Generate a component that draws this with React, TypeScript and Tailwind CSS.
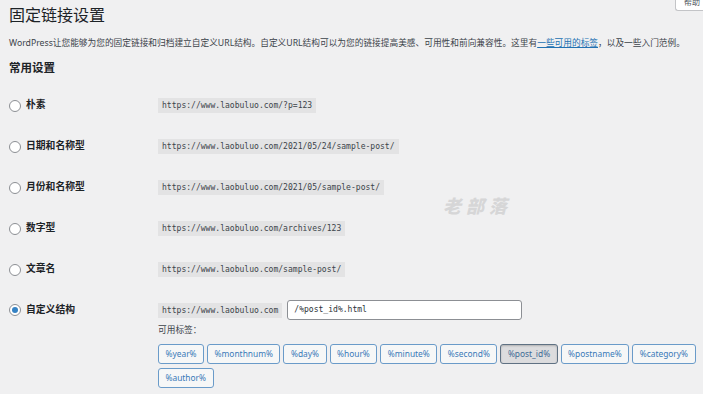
import React from "react";

const rows = [
  { label: "朴素", url: "https://www.laobuluo.com/?p=123" },
  { label: "日期和名称型", url: "https://www.laobuluo.com/2021/05/24/sample-post/" },
  { label: "月份和名称型", url: "https://www.laobuluo.com/2021/05/sample-post/" },
  { label: "数字型", url: "https://www.laobuluo.com/archives/123" },
  { label: "文章名", url: "https://www.laobuluo.com/sample-post/" },
];

const tags = [
  "%year%",
  "%monthnum%",
  "%day%",
  "%hour%",
  "%minute%",
  "%second%",
  "%post_id%",
  "%postname%",
  "%category%",
  "%author%",
];

const sans = "font-['Noto_Sans','Noto_Sans_CJK_SC',sans-serif]";

function Radio({ checked }: { checked?: boolean }) {
  return (
    <span className="flex h-[12px] w-[12px] shrink-0 items-center justify-center rounded-full border border-[#8c8f94] bg-white">
      {checked && <span className="h-[6px] w-[6px] rounded-full bg-[#3582c4]" />}
    </span>
  );
}

function Code({ children }: { children: React.ReactNode }) {
  return (
    <code className="bg-[#e3e3e4] px-[4px] py-[2px] font-['DejaVu_Sans_Mono',monospace] text-[8.05px] leading-[11px] text-[#3c434a]">
      {children}
    </code>
  );
}

export default function App() {
  return (
    <div className={`relative h-[394px] w-[703px] overflow-hidden bg-[#f0f0f1] pl-[9px] ${sans}`}>
      <div className="absolute right-0 top-0 h-[11px] w-[28px] overflow-hidden rounded-bl-[3px] border-b border-l border-[#c3c4c7] bg-white">
        <span className="absolute left-[8px] top-[-3px] text-[8px] leading-[10px] text-[#50575e]">帮助</span>
      </div>

      <div className="pointer-events-none absolute left-[443px] top-[196px] text-[18px] font-black italic leading-[20px] tracking-[5px] text-[#d6d6d7]">
        老部落
      </div>

      <h1 className="pt-[5px] text-[16px] leading-[20px] font-normal text-[#1d2327]">固定链接设置</h1>

      <p className="mt-[12px] text-[8.7px] leading-[12px] whitespace-nowrap text-[#3c434a]">
        WordPress让您能够为您的固定链接和归档建立自定义URL结构。自定义URL结构可以为您的链接提高美感、可用性和前向兼容性。这里有
        <a className="text-[#2271b1] underline">一些可用的标签</a>
        ，以及一些入门范例。
      </p>

      <h2 className="mt-[12px] text-[11.5px] leading-[14px] font-bold text-[#1d2327]">常用设置</h2>

      <div className="mt-[10px] flex flex-col">
        {rows.map((r) => (
          <div key={r.label} className="flex h-[41px] items-center">
            <div className="flex w-[149px] items-center gap-[5px]">
              <Radio />
              <span className="text-[9.8px] font-bold text-[#1d2327]">{r.label}</span>
            </div>
            <Code>{r.url}</Code>
          </div>
        ))}
      </div>

      <div className="mt-[10px] flex items-start">
        <div className="flex h-[20px] w-[149px] shrink-0 items-center gap-[5px]">
          <Radio checked />
          <span className="text-[9.8px] font-bold text-[#1d2327]">自定义结构</span>
        </div>
        <div className="flex w-[545px] flex-col">
          <div className="flex items-center gap-[5px]">
            <Code>https://www.laobuluo.com</Code>
            <div className="flex h-[20px] w-[235px] items-center rounded-[3px] border border-[#8c8f94] bg-white px-[6px] font-['DejaVu_Sans_Mono',monospace] text-[8.05px] text-[#2c3338]">
              /%post_id%.html
            </div>
          </div>
          <div className="mt-[4px] text-[8.7px] leading-[12px] text-[#3c434a]">可用标签：</div>
          <div className="mt-[8px] flex w-[545px] flex-wrap gap-x-[3px] gap-y-[4px]">
            {tags.map((t) =>
              t === "%post_id%" ? (
                <span
                  key={t}
                  className="flex h-[20px] items-center rounded-[3px] border border-[#5f7183] bg-[#dcdcde] px-[6.5px] text-[8.4px] text-[#3f6b96] shadow-[inset_0_1px_2px_rgba(0,0,0,0.2)]"
                >
                  {t}
                </span>
              ) : (
                <span
                  key={t}
                  className="flex h-[20px] items-center rounded-[3px] border border-[#6a9bc9] bg-[#f6f7f7] px-[6.5px] text-[8.4px] text-[#3a7ab8]"
                >
                  {t}
                </span>
              )
            )}
          </div>
        </div>
      </div>
    </div>
  );
}
